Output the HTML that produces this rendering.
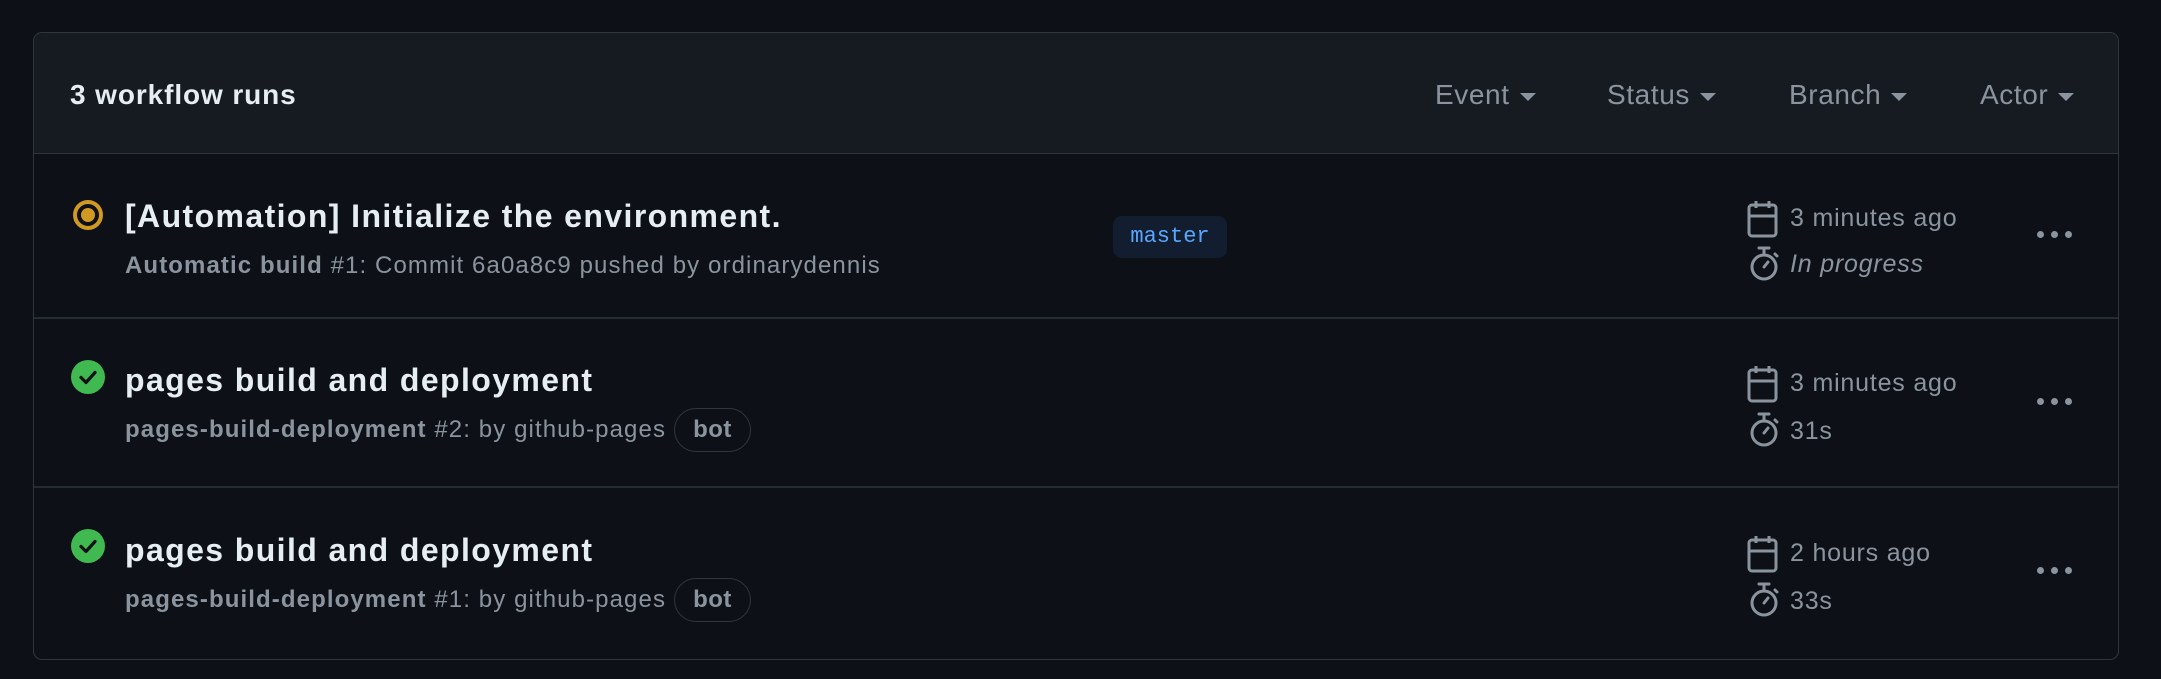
<!DOCTYPE html>
<html><head><meta charset="utf-8"><style>
*{box-sizing:border-box;margin:0;padding:0}
body{width:2161px;height:679px;background:#0d1117;font-family:"Liberation Sans",sans-serif;color:#e6edf3;position:relative;overflow:hidden}
.card{position:absolute;left:33px;top:32px;width:2086px;height:628px;border:1.5px solid #30363d;border-radius:9px;overflow:hidden}
.hdr{position:absolute;left:0;top:0;width:100%;height:121px;background:#161b22;border-bottom:1.5px solid #30363d}
.a{position:absolute;white-space:nowrap}
.t{font-size:28px;font-weight:bold;color:#e6edf3;letter-spacing:0.9px}
.f{font-size:28px;color:#8b949e;letter-spacing:0.6px}
.f:after{content:"";display:inline-block;margin-left:10px;vertical-align:middle;border-left:8px solid transparent;border-right:8px solid transparent;border-top:8px solid #8b949e}
.sep{position:absolute;left:0;width:100%;height:1.5px;background:#262c34}
.ti{font-size:32px;font-weight:bold;color:#e6edf3;letter-spacing:1.4px}
.sub{font-size:24px;color:#8b949e;letter-spacing:1.1px}
.sub b{color:#8b949e}
.bot{display:inline-block;border:1.5px solid #30363d;border-radius:22px;padding:7px 18px;font-weight:bold;color:#8b949e;margin-left:8px;letter-spacing:0.5px}
.m{font-size:25px;color:#8b949e;letter-spacing:0.8px}
.dots{position:absolute;font-size:0}
.dots i{display:inline-block;width:7px;height:7px;border-radius:4px;background:#8b949e;margin-right:7px}
</style></head><body>
<div class="card">
<div class="hdr"></div>
<div class="a t" style="left:36px;top:46px">3 workflow runs</div>
<div class="a f" style="left:1401px;top:46px">Event</div>
<div class="a f" style="left:1573px;top:46px">Status</div>
<div class="a f" style="left:1755px;top:46px">Branch</div>
<div class="a f" style="left:1946px;top:46px">Actor</div>
<div class="sep" style="top:284px"></div>
<div class="sep" style="top:453px"></div>

<svg class="a" style="left:38px;top:166px" width="32" height="32" viewBox="0 0 32 32"><circle cx="16" cy="16" r="13" fill="none" stroke="#d29922" stroke-width="4"/><circle cx="16" cy="16" r="7" fill="#d29922"/></svg>
<div class="a ti" style="left:91px;top:165px">[Automation] Initialize the environment.</div>
<div class="a sub" style="left:91px;top:219px"><b>Automatic build</b> #1: Commit 6a0a8c9 pushed by ordinarydennis</div>
<div class="a" style="left:1079px;top:183px;width:114px;height:42px;background:#121d2f;border-radius:9px;color:#58a6ff;font-family:'Liberation Mono',monospace;font-size:22px;line-height:42px;text-align:center">master</div>

<svg class="a" style="left:37px;top:327px" width="34" height="34" viewBox="0 0 34 34"><circle cx="17" cy="17" r="17" fill="#3fb950"/><path d="M10 17.5l5 5 9-10" fill="none" stroke="#0d1117" stroke-width="3.2" stroke-linecap="round" stroke-linejoin="round"/></svg>
<div class="a ti" style="left:91px;top:329px">pages build and deployment</div>
<div class="a sub" style="left:91px;top:375px"><b>pages-build-deployment</b> #2: by github-pages<span class="bot">bot</span></div>

<svg class="a" style="left:37px;top:496px" width="34" height="34" viewBox="0 0 34 34"><circle cx="17" cy="17" r="17" fill="#3fb950"/><path d="M10 17.5l5 5 9-10" fill="none" stroke="#0d1117" stroke-width="3.2" stroke-linecap="round" stroke-linejoin="round"/></svg>
<div class="a ti" style="left:91px;top:499px">pages build and deployment</div>
<div class="a sub" style="left:91px;top:545px"><b>pages-build-deployment</b> #1: by github-pages<span class="bot">bot</span></div>
</div>

<svg style="position:absolute;left:1747px;top:200px" width="32" height="38" viewBox="0 0 32 38"><rect x="2" y="5" width="27" height="31" rx="3" fill="none" stroke="#8b949e" stroke-width="3"/><path d="M2 16h27M9 1v7M22 1v7" stroke="#8b949e" stroke-width="3"/></svg>
<div class="a m" style="left:1790px;top:204px">3 minutes ago</div>
<svg style="position:absolute;left:1748px;top:246px" width="32" height="36" viewBox="0 0 32 36"><circle cx="16" cy="21" r="12" fill="none" stroke="#8b949e" stroke-width="3"/><path d="M11 2h10M16 2v7M27 8l2 2M16 21l4-5" stroke="#8b949e" stroke-width="3" stroke-linecap="round"/></svg>
<div class="a m" style="left:1790px;top:250px;font-style:italic">In progress</div>
<div class="dots" style="left:2037px;top:231px"><i></i><i></i><i></i></div>

<svg style="position:absolute;left:1747px;top:365px" width="32" height="38" viewBox="0 0 32 38"><rect x="2" y="5" width="27" height="31" rx="3" fill="none" stroke="#8b949e" stroke-width="3"/><path d="M2 16h27M9 1v7M22 1v7" stroke="#8b949e" stroke-width="3"/></svg>
<div class="a m" style="left:1790px;top:369px">3 minutes ago</div>
<svg style="position:absolute;left:1748px;top:412px" width="32" height="36" viewBox="0 0 32 36"><circle cx="16" cy="21" r="12" fill="none" stroke="#8b949e" stroke-width="3"/><path d="M11 2h10M16 2v7M27 8l2 2M16 21l4-5" stroke="#8b949e" stroke-width="3" stroke-linecap="round"/></svg>
<div class="a m" style="left:1790px;top:417px">31s</div>
<div class="dots" style="left:2037px;top:398px"><i></i><i></i><i></i></div>

<svg style="position:absolute;left:1747px;top:535px" width="32" height="38" viewBox="0 0 32 38"><rect x="2" y="5" width="27" height="31" rx="3" fill="none" stroke="#8b949e" stroke-width="3"/><path d="M2 16h27M9 1v7M22 1v7" stroke="#8b949e" stroke-width="3"/></svg>
<div class="a m" style="left:1790px;top:539px">2 hours ago</div>
<svg style="position:absolute;left:1748px;top:582px" width="32" height="36" viewBox="0 0 32 36"><circle cx="16" cy="21" r="12" fill="none" stroke="#8b949e" stroke-width="3"/><path d="M11 2h10M16 2v7M27 8l2 2M16 21l4-5" stroke="#8b949e" stroke-width="3" stroke-linecap="round"/></svg>
<div class="a m" style="left:1790px;top:587px">33s</div>
<div class="dots" style="left:2037px;top:567px"><i></i><i></i><i></i></div>
</body></html>
